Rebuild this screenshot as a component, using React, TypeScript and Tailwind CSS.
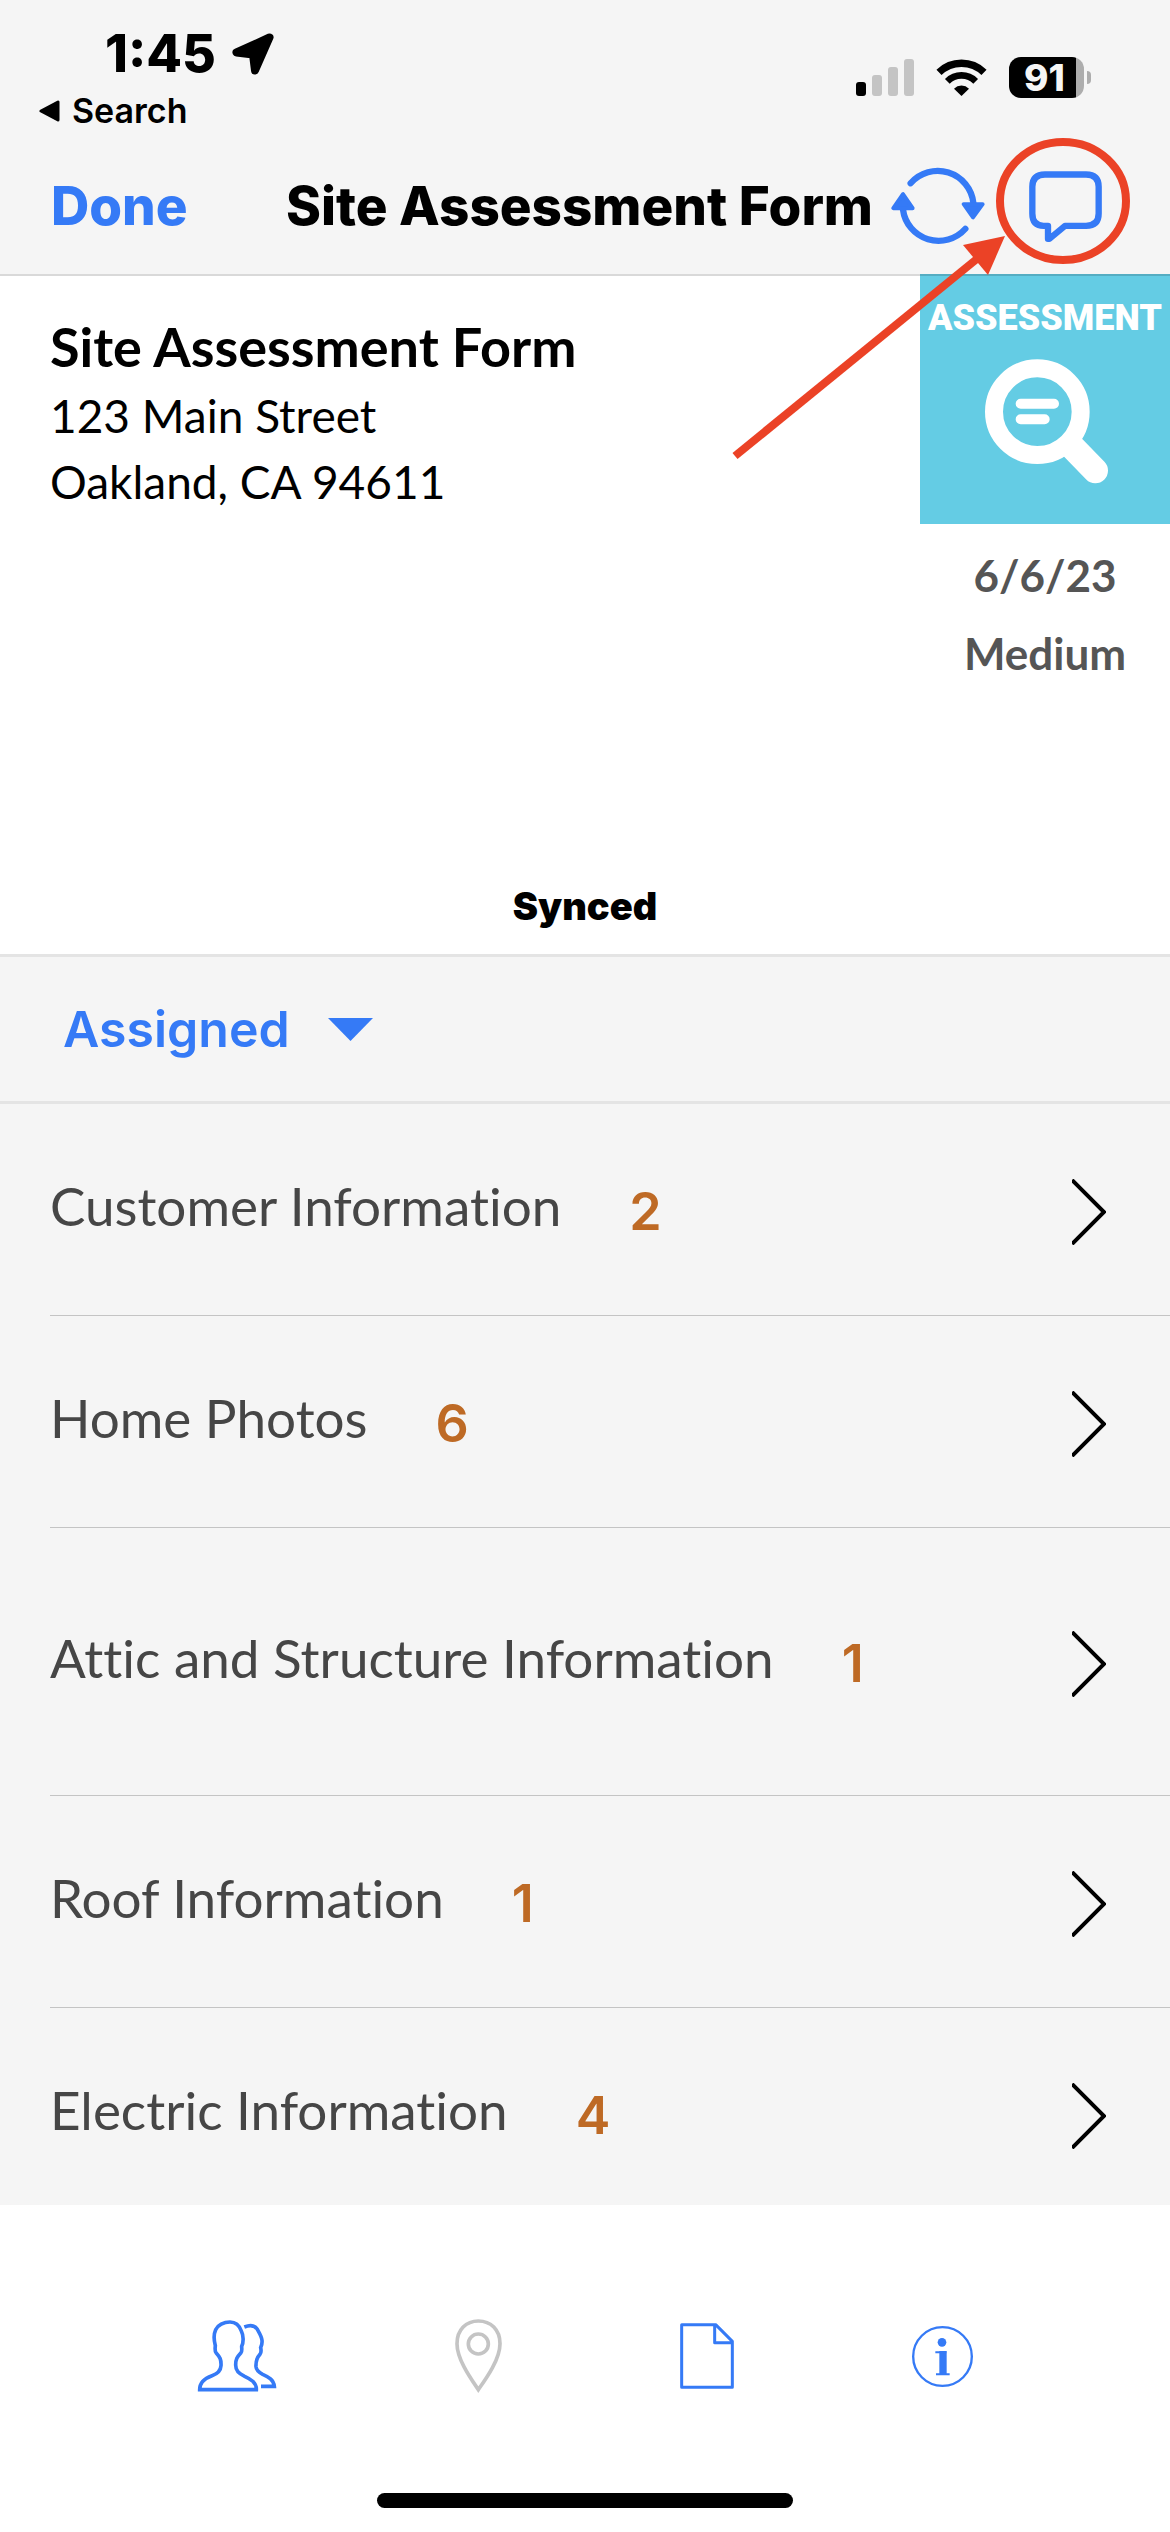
import React, { useState } from "react";

const sections = [
	{ name: "Customer Information", count: 2 },
	{ name: "Home Photos", count: 6 },
	{ name: "Attic and Structure Information", count: 1, tall: true },
	{ name: "Roof Information", count: 1 },
	{ name: "Electric Information", count: 4 },
];

const StatusBar = () => (
	<div className="flex items-start justify-between pl-[39px] pr-[79px] pt-[30px]">
		<div className="flex flex-col">
			<div className="flex items-center gap-4 pl-[66px]">
				<span className="text-[52px] leading-[48px] font-extrabold">1:45</span>
				<svg width="42" height="42" viewBox="0 0 42 42" aria-hidden="true">
					<path
						d="M37.5 4.5 L4.5 19.5 L21 21.5 L23 37.5 Z"
						fill="#000"
						stroke="#000"
						strokeWidth="8"
						strokeLinejoin="round"
					/>
				</svg>
			</div>
			<a
				href="#search"
				className="mt-2 flex items-center gap-3 text-[34px] leading-[50px] font-semibold"
			>
				<svg width="21" height="22" viewBox="0 0 21 22" aria-hidden="true">
					<path
						d="M2 11 L19 2 V20 Z"
						stroke="#000"
						strokeWidth="3"
						strokeLinejoin="round"
					/>
				</svg>
				Search
			</a>
		</div>
		<div className="mt-[27px] flex items-center">
			<svg width="58" height="37" viewBox="0 0 58 37" aria-hidden="true">
				<rect x="0" y="23" width="10" height="14" rx="3" fill="#000" />
				<rect x="16" y="16" width="10" height="21" rx="3" fill="#c4c4c4" />
				<rect x="32" y="8" width="10" height="29" rx="3" fill="#c4c4c4" />
				<rect x="48" y="0" width="10" height="37" rx="3" fill="#c4c4c4" />
			</svg>
			<svg
				className="ml-[22px]"
				width="51"
				height="37"
				viewBox="0 0 151 111"
				aria-hidden="true"
			>
				<path d="M8 40 A97 97 0 0 1 143 40" fill="none" stroke="#000" strokeWidth="22" />
				<path d="M33 67 A60 60 0 0 1 118 67" fill="none" stroke="#000" strokeWidth="20" />
				<path d="M75.5 111 L53 89 A32 32 0 0 1 98 89 Z" fill="#000" />
			</svg>
			<div className="ml-[22px] flex items-center gap-[3px]">
				<div className="flex h-[41px] w-[75px] items-center justify-center rounded-[12px] bg-linear-to-r from-black from-90% to-[#adadad] to-90%">
					<span className="pr-1 text-[37px] leading-[41px] font-extrabold text-[#f5f5f5]">
						91
					</span>
				</div>
				<span className="h-[13px] w-1 rounded-r-full bg-[#adadad]" />
			</div>
		</div>
	</div>
);

const SyncIcon = () => (
	<svg width="94" height="78" viewBox="0 0 281 235" aria-hidden="true">
		<g stroke="#357af6" strokeLinecap="round" strokeLinejoin="round">
			<path
				d="M58 49 A108 108 0 0 1 247 108 M223 186 A108 108 0 0 1 35 128"
				fill="none"
				strokeWidth="19"
			/>
			<path
				d="M218 112 H275 L246 152 Z M6 124 H64 L35 82 Z"
				fill="#357af6"
				strokeWidth="12"
			/>
		</g>
	</svg>
);

const ChatIcon = () => (
	<svg width="73" height="71" viewBox="0 0 219 212" aria-hidden="true">
		<path
			d="M44 164 H57 V203 H61 L108 164 H171 Q209 164 209 127 V47 Q209 10 171 10 H48 Q10 10 10 47 V127 Q10 164 44 164 Z"
			fill="none"
			stroke="#357af6"
			strokeWidth="19"
			strokeLinejoin="round"
		/>
	</svg>
);

const AssessmentTile = () => (
	<div className="flex h-[250px] w-[250px] flex-col items-center border-t-2 border-black/15 bg-[#64cce4] pt-5">
		<span className="font-['Roboto',sans-serif] text-[36px] leading-[44px] font-black text-white">
			ASSESSMENT
		</span>
		<svg
			className="mt-[18px]"
			width="126"
			height="128"
			viewBox="-8 0 378 384"
			fill="none"
			stroke="#fff"
			aria-hidden="true"
		>
			<circle cx="158" cy="161" r="130" strokeWidth="54" />
			<path d="M108 137 H208 M108 184 H180" strokeWidth="30" strokeLinecap="round" />
			<path d="M262 266 L332 338" strokeWidth="76" strokeLinecap="round" />
		</svg>
	</div>
);

// Red circle and arrow pointing at the chat button
const Callout = () => (
	<svg
		className="pointer-events-none absolute top-[137px] right-[39px]"
		width="400"
		height="324"
		viewBox="731 137 400 324"
		fill="none"
		aria-hidden="true"
	>
		<ellipse cx="1063" cy="201" rx="63" ry="59" stroke="#eb4226" strokeWidth="8" />
		<path d="M735 456 L978 258" stroke="#eb4226" strokeWidth="8" />
		<path d="M1005 236 L963 245 L988 275 Z" fill="#eb4226" />
	</svg>
);

const TabBar = () => (
	<footer className="flex h-[327px] shrink-0 flex-col items-center justify-between bg-white pt-[114px] pb-6">
		<nav className="flex w-full items-center justify-between px-[197px]">
			<button type="button" aria-label="Contacts">
				<svg width="80" height="74" viewBox="0 0 240 222" fill="none" stroke="#357af6" strokeWidth="11">
					<path d="M8 212 H178 C179 190 160 180 143 172 C125 163 116 156 116 138 C116 120 120 114 132 101 C136 96 134 90 134 82 C140 70 140 50 133 36 C126 16 116 9 99 9 C80 9 62 19 56 32 C50 45 51 65 55 80 C54 90 53 96 57 101 C69 114 73 122 72 140 C71 158 60 165 45 170 C25 177 8 190 8 212 Z" />
					<path d="M142 24 C160 17 174 20 181 31 C187 42 194 52 195 64 C196 75 194 80 191 86 C193 95 194 100 189 106 C179 117 176 125 177 143 C178 155 185 160 197 166 C215 174 230 182 232 202 H192" />
				</svg>
			</button>
			<button type="button" aria-label="Location">
				<svg width="47" height="74" viewBox="0 0 141 222" fill="none" stroke="#c4c4c4" strokeWidth="11">
					<path d="M70 212 C50 182 6 122 6 74 C6 32 34 6 70 6 C107 6 135 32 135 74 C135 122 91 182 70 212 Z" />
					<circle cx="70" cy="75" r="30" />
				</svg>
			</button>
			<button type="button" aria-label="Documents">
				<svg width="54" height="66" viewBox="0 0 162 198" fill="none" stroke="#357af6" strokeWidth="9" strokeLinejoin="round">
					<path d="M5 5 H107 L157 55 V193 H5 Z M104 6 V59 H156" />
				</svg>
			</button>
			<button type="button" aria-label="Information">
				<svg width="61" height="61" viewBox="0 0 183 183" fill="none" stroke="#357af6">
					<circle cx="91.5" cy="91.5" r="88" strokeWidth="7" />
					<circle cx="90" cy="49" r="13" fill="#357af6" stroke="none" />
					<path d="M93 75 V146" strokeWidth="22" />
					<path d="M70 79 H103 M72 145 H113" strokeWidth="6" />
				</svg>
			</button>
		</nav>
		<div className="h-[15px] w-[416px] rounded-full bg-black" />
	</footer>
);

const App = () => {
	const [open, setOpen] = useState(false);

	return (
		<div className="relative flex h-screen flex-col overflow-hidden bg-white font-['Inter',sans-serif] text-black">
			<header className="h-[274px] shrink-0 bg-[#f5f5f5]">
				<StatusBar />
				<div className="mt-[30px] flex items-center pr-[68px] pl-[51px]">
					<button type="button" className="text-[53px] leading-[80px] font-extrabold text-[#357af6]">
						Done
					</button>
					<h1 className="ml-auto text-[53px] leading-[80px] font-extrabold whitespace-nowrap">
						Site Assessment Form
					</h1>
					<div className="ml-[18px] flex items-center gap-11">
						<button type="button" aria-label="Sync">
							<SyncIcon />
						</button>
						<button type="button" aria-label="Messages">
							<ChatIcon />
						</button>
					</div>
				</div>
			</header>

			<section className="shrink-0 border-b-[3px] border-[#e4e4e4]">
				<div className="flex">
					<div className="flex-1 border-t-2 border-black/15 pt-[35px] pl-[50px] font-['Lato','Open_Sans',sans-serif]">
						<h2 className="text-[54px] leading-[72px] font-bold">
							Site Assessment Form
						</h2>
						<address className="text-[46px] leading-[66px] not-italic">
							123 Main Street
							<br />
							Oakland, CA 94611
						</address>
					</div>
					<div className="flex flex-col">
						<AssessmentTile />
						<div className="pt-3 text-center font-['Lato','Open_Sans',sans-serif] text-[44px] leading-[78px] font-bold text-[#555555]">
							<p>6/6/23</p>
							<p>Medium</p>
						</div>
					</div>
				</div>
				<p className="pt-[188px] pb-[22px] text-center text-[38px] leading-[52px] font-black">
					Synced
				</p>
			</section>

			<main className="flex min-h-0 flex-1 flex-col bg-[#f5f5f5]">
				<div className="flex h-[147px] shrink-0 items-center border-b-[3px] border-[#e4e4e4] pl-[63px]">
					<button
						type="button"
						aria-expanded={open}
						onClick={() => setOpen(!open)}
						className="flex items-center gap-[38px] text-[50px] leading-[60px] font-semibold text-[#357af6]"
					>
						Assigned
						<svg width="45" height="23" viewBox="0 0 45 23" aria-hidden="true">
							<path d="M0 0 H45 L22.5 23 Z" fill="#357af6" />
						</svg>
					</button>
				</div>
				<ul className="min-h-0 flex-1 overflow-hidden pl-[50px]">
					{sections.map((s) => (
						<li
							key={s.name}
							className={
								s.tall
									? "h-[268px] border-b border-[#c4c4c4]"
									: "h-[212px] border-b border-[#c4c4c4]"
							}
						>
							<button
								type="button"
								className="flex h-full w-full items-center pt-1 pr-16 text-left"
							>
								<span className="pb-3 font-['Lato','Open_Sans',sans-serif] text-[53px] leading-[64px] text-[#464646] [font-variant-ligatures:none]">
									{s.name}
								</span>
								<span className="ml-[68px] text-[52px] leading-[64px] font-semibold text-[#be6a25]">
									{s.count}
								</span>
								<svg
									className="ml-auto"
									width="34"
									height="66"
									viewBox="0 0 34 66"
									fill="none"
									aria-hidden="true"
								>
									<path d="M0 1 L32 33 L0 65" stroke="#000" strokeWidth="4" />
								</svg>
							</button>
						</li>
					))}
				</ul>
			</main>

			<TabBar />
			<Callout />
		</div>
	);
};
export default App;
